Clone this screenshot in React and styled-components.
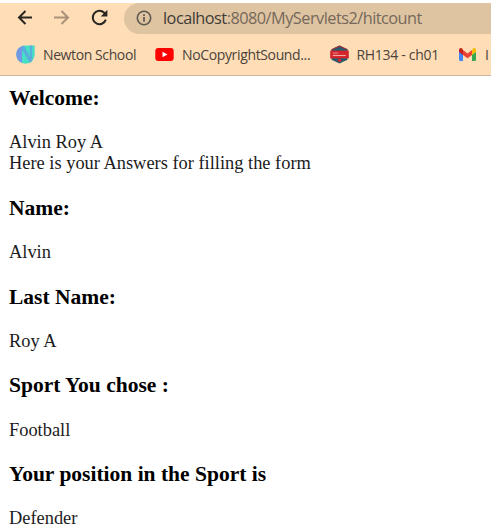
import React from "react";
import styled, { createGlobalStyle } from "styled-components";

const GlobalStyle = createGlobalStyle`
  body { margin: 0; background: #fff; overflow: hidden; }
  * { box-sizing: border-box; }
`;

const Page = styled.div`
  width: 491px;
  height: 532px;
  padding-top: 3px;
  overflow: hidden;
  background: #fff;
`;

const Browser = styled.header`
  height: 73px;
  background: #ffdeb7;
  border-bottom: 1px solid #c9b3a3;
  font-family: "Open Sans", "Noto Sans", sans-serif;
`;

const Toolbar = styled.div`
  display: flex;
  height: 31px;
`;

const NavButtons = styled.div`
  display: flex;
  flex: none;
  width: 124px;
  padding: 5px 0 0 14.5px;
  gap: 18.5px;
`;

const NavIcon = styled.svg`
  flex: none;
  width: 19px;
  height: 19px;
  fill: none;
  stroke: ${(p) => p.$color};
  stroke-width: 2;
`;

const AddressBar = styled.div`
  display: flex;
  align-items: center;
  flex: 1;
  padding: 0 0 2px 12px;
  border-radius: 16px 0 0 16px;
  background: #dfc4a2;
`;

const InfoIcon = styled.svg`
  flex: none;
  width: 16px;
  height: 16px;
  margin-right: 11px;
`;

const Url = styled.span`
  font-size: 16.3px;
  line-height: 22px;
  letter-spacing: -0.51px;
  white-space: nowrap;
  color: #75685a;
`;

const Host = styled.span`
  color: #403b36;
`;

const Bookmarks = styled.nav`
  display: flex;
  align-items: center;
  height: 41px;
  padding-left: 16px;
`;

const Bookmark = styled.div`
  display: flex;
  flex: none;
  align-items: center;
  width: ${(p) => p.$width}px;
  gap: 8px;
  font-size: 14px;
  line-height: 20px;
  letter-spacing: ${(p) => p.$tracking || 0}px;
  white-space: nowrap;
  color: #4b433b;

  svg {
    flex: none;
    width: 19px;
    height: 19px;
  }
`;

const Content = styled.main`
  padding: 10px 9px 0;
  font-family: "Liberation Serif", "Times New Roman", serif;
  color: #000;
`;

const Section = styled.section`
  margin-bottom: 21.5px;
`;

const Heading = styled.h3`
  margin: 0 0 22.3px;
  font-size: 21.5px;
  line-height: 24px;
`;

const Answer = styled.div`
  font-size: 18.4px;
  line-height: 21px;
  color: #1c1c1c;
`;

const bookmarks = [
  {
    label: "Newton School",
    width: 139,
    tracking: -0.4,
    icon: (
      <svg viewBox="0 0 19 19">
        <path d="M18.7 0.4v9.2a9.2 9.2 0 1 1-9.2-9.2Z" fill="#45dfc6" />
        <path d="M6 1.1A9.2 9.2 0 0 0 6 18.1Z" fill="#7397e5" />
        <path d="M6 1.1 8 .6l5.8 11V.4h2.4v15.5l-2.4 1.8L6 4.8Z" fill="#59aedc" />
      </svg>
    ),
  },
  {
    label: "NoCopyrightSound...",
    width: 174.5,
    tracking: -0.36,
    icon: (
      <svg viewBox="0 0 19 19">
        <rect x="0.3" y="3" width="18.4" height="13" rx="3" fill="#f00" />
        <path d="m7.5 6.8 5 2.7-5 2.8Z" fill="#fff" />
      </svg>
    ),
  },
  {
    label: "RH134 - ch01",
    width: 128.5,
    tracking: -0.3,
    icon: (
      <svg viewBox="0 0 19 19">
        <path d="m9.5 .6 8 3.6v10.6l-8 3.6-8-3.6V4.2Z" fill="#245b6d" />
        <path d="m9.5 .6 8 3.6v1l-8-3.4-8 3.4v-1Z" fill="#a52a32" />
        <path d="M.2 5.6h18.6v7.8H.2Z" fill="#d3242b" />
        <path d="M2.8 8.1h5.4" stroke="#f0958f" strokeWidth=".9" />
        <path d="M2.8 10.5h13" stroke="#f3aaa5" strokeWidth="1.1" />
        <circle cx="9.5" cy="15.2" r="1.8" fill="#d3242b" />
      </svg>
    ),
  },
  {
    label: "I",
    width: 50,
    icon: (
      <svg viewBox="0 0 19 19">
        <path d="M1 5v9.8c0 .7.5 1.2 1.2 1.2H5V7Z" fill="#4285f4" />
        <path d="M14 7v9h2.8c.7 0 1.2-.5 1.2-1.2V5Z" fill="#34a853" />
        <path d="M14 5.2V10l4-3V5.1c0-2-2-2.5-3.2-1.5Z" fill="#fbbc04" />
        <path d="M5 5v5l4.5 3.3L14 10V5L9.5 8.4Z" fill="#ea4335" />
        <path d="M1 5.1V7l4 3V5L4.2 3.6C3 2.6 1 3.1 1 5.1Z" fill="#c5221f" />
      </svg>
    ),
  },
];

const sections = [
  { title: "Welcome:", lines: ["Alvin Roy A", "Here is your Answers for filling the form"] },
  { title: "Name:", lines: ["Alvin"] },
  { title: "Last Name:", lines: ["Roy A"] },
  { title: "Sport You chose :", lines: ["Football"] },
  { title: "Your position in the Sport is", lines: ["Defender"] },
];

export default function App() {
  return (
    <Page>
      <GlobalStyle />
      <Browser>
        <Toolbar>
          <NavButtons>
            <NavIcon viewBox="0 0 19 19" $color="#292622">
              <path d="M17 9.5H4M10.5 3 4 9.5l6.5 6.5" />
            </NavIcon>
            <NavIcon viewBox="0 0 19 19" $color="#a99179">
              <path d="M2 9.5h13.5M9.5 3 16 9.5 9.5 16" />
            </NavIcon>
            <NavIcon viewBox="0 0 19 19" $color="#292622">
              <path d="M15.8 11.6a6.7 6.7 0 1 1-1.6-6.8l1.5 1.6" />
              <path d="M17.4 1.8v6.6h-6.6Z" fill="#292622" stroke="none" />
            </NavIcon>
          </NavButtons>
          <AddressBar>
            <InfoIcon viewBox="0 0 16 16">
              <circle cx="8" cy="8" r="6.7" fill="none" stroke="#5d5850" strokeWidth="1.6" />
              <path d="M8 7v4.7M8 4.2v1.7" stroke="#5d5850" strokeWidth="1.7" />
            </InfoIcon>
            <Url>
              <Host>localhost</Host>:8080/MyServlets2/hitcount
            </Url>
          </AddressBar>
        </Toolbar>
        <Bookmarks>
          {bookmarks.map((b) => (
            <Bookmark key={b.label} $width={b.width} $tracking={b.tracking}>
              {b.icon}
              <span>{b.label}</span>
            </Bookmark>
          ))}
        </Bookmarks>
      </Browser>
      <Content>
        {sections.map((s) => (
          <Section key={s.title}>
            <Heading>{s.title}</Heading>
            {s.lines.map((line) => (
              <Answer key={line}>{line}</Answer>
            ))}
          </Section>
        ))}
      </Content>
    </Page>
  );
}
